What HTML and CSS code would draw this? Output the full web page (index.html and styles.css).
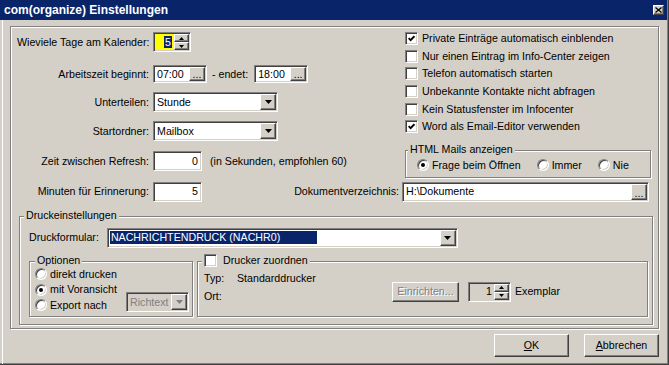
FILE: index.html
```html
<!DOCTYPE html>
<html lang="de">
<head>
    <meta charset="UTF-8">
    <title>com(organize) Einstellungen</title>
    <link rel="stylesheet" href="styles.css">
</head>
<body>
<div class="window">
    <div class="titlebar">
        <span class="title">com(organize) Einstellungen</span>
        <span class="close raised">
            <svg width="7" height="6" viewBox="0 0 7 6"><path d="M0.5 0.5 L6.5 5.5 M6.5 0.5 L0.5 5.5" stroke="#000" stroke-width="1.2"/></svg>
        </span>
    </div>

    <div class="client">
        <div class="panel">
            <div class="top">
                <div class="left-col">
                    <div class="row">
                        <span class="lbl">Wieviele Tage am Kalender:</span>
                        <div class="field spin days">
                            <span class="spin-val"><span class="sel">5</span></span>
                            <span class="spin-btns">
                                <span class="spin-btn raised"><svg width="5" height="3" viewBox="0 0 5 3"><polygon points="2.5,0 5,3 0,3" fill="#000"/></svg></span>
                                <span class="spin-btn raised"><svg width="5" height="3" viewBox="0 0 5 3"><polygon points="0,0 5,0 2.5,3" fill="#000"/></svg></span>
                            </span>
                        </div>
                    </div>
                    <div class="row">
                        <span class="lbl">Arbeitszeit beginnt:</span>
                        <div class="field time">
                            <span class="text">07:00</span>
                            <span class="dots raised">...</span>
                        </div>
                        <span class="between">- endet:</span>
                        <div class="field time">
                            <span class="text">18:00</span>
                            <span class="dots raised">...</span>
                        </div>
                    </div>
                    <div class="row">
                        <span class="lbl">Unterteilen:</span>
                        <div class="field combo">
                            <span class="text">Stunde</span>
                            <span class="drop raised"><svg width="7" height="4" viewBox="0 0 7 4"><polygon points="0,0 7,0 3.5,4" fill="#000"/></svg></span>
                        </div>
                    </div>
                    <div class="row">
                        <span class="lbl">Startordner:</span>
                        <div class="field combo">
                            <span class="text">Mailbox</span>
                            <span class="drop raised"><svg width="7" height="4" viewBox="0 0 7 4"><polygon points="0,0 7,0 3.5,4" fill="#000"/></svg></span>
                        </div>
                    </div>
                    <div class="row">
                        <span class="lbl">Zeit zwischen Refresh:</span>
                        <div class="field num"><span class="text">0</span></div>
                        <span class="note">(in Sekunden, empfohlen 60)</span>
                    </div>
                </div>

                <div class="right-col">
                    <div class="check"><span class="cb"><svg width="7" height="7" viewBox="0 0 7 7"><polyline points="0.6,3.2 2.6,5.2 6.4,1.2" fill="none" stroke="#000" stroke-width="1.8"/></svg></span>Private Einträge automatisch einblenden</div>
                    <div class="check"><span class="cb"></span>Nur einen Eintrag im Info-Center zeigen</div>
                    <div class="check"><span class="cb"></span>Telefon automatisch starten</div>
                    <div class="check"><span class="cb"></span>Unbekannte Kontakte nicht abfragen</div>
                    <div class="check"><span class="cb"></span>Kein Statusfenster im Infocenter</div>
                    <div class="check"><span class="cb"><svg width="7" height="7" viewBox="0 0 7 7"><polyline points="0.6,3.2 2.6,5.2 6.4,1.2" fill="none" stroke="#000" stroke-width="1.8"/></svg></span>Word als Email-Editor verwenden</div>

                    <fieldset class="group html-group">
                        <legend>HTML Mails anzeigen</legend>
                        <div class="radios-inline">
                            <span class="radio"><span class="rb on"></span>Frage beim Öffnen</span>
                            <span class="radio"><span class="rb"></span>Immer</span>
                            <span class="radio"><span class="rb"></span>Nie</span>
                        </div>
                    </fieldset>
                </div>
            </div>

            <div class="row doc-row">
                <span class="lbl">Minuten für Erinnerung:</span>
                <div class="field num"><span class="text">5</span></div>
                <span class="doc-lbl">Dokumentverzeichnis:</span>
                <div class="field path">
                    <span class="text">H:\Dokumente</span>
                    <span class="dots raised">...</span>
                </div>
            </div>

            <fieldset class="group print">
                <legend>Druckeinstellungen</legend>
                <div class="form-row">
                    <span>Druckformular:</span>
                    <div class="field combo form-combo">
                        <span class="text"><span class="sel-block">NACHRICHTENDRUCK (NACHR0)</span></span>
                        <span class="drop raised"><svg width="7" height="4" viewBox="0 0 7 4"><polygon points="0,0 7,0 3.5,4" fill="#000"/></svg></span>
                    </div>
                </div>

                <div class="subgroups">
                    <fieldset class="group options">
                        <legend>Optionen</legend>
                        <div class="options-body">
                            <div class="radio-list">
                                <span class="radio"><span class="rb"></span>direkt drucken</span>
                                <span class="radio"><span class="rb on"></span>mit Voransicht</span>
                                <span class="radio"><span class="rb"></span>Export nach</span>
                            </div>
                            <div class="field combo disabled export">
                                <span class="text">Richtext</span>
                                <span class="drop raised"><svg width="7" height="4" viewBox="0 0 7 4"><polygon points="0,0 7,0 3.5,4" fill="#808080"/></svg></span>
                            </div>
                        </div>
                    </fieldset>

                    <fieldset class="group printer">
                        <legend><span class="cb"></span>Drucker zuordnen</legend>
                        <div class="printer-body">
                            <div class="info">
                                <span>Typ:</span><span>Standarddrucker</span>
                                <span>Ort:</span><span></span>
                            </div>
                            <div class="actions">
                                <span class="btn raised disabled setup">Einrichten...</span>
                                <div class="field spin copies">
                                    <span class="spin-val">1</span>
                                    <span class="spin-btns">
                                        <span class="spin-btn raised"><svg width="5" height="3" viewBox="0 0 5 3"><polygon points="2.5,0 5,3 0,3" fill="#000"/></svg></span>
                                        <span class="spin-btn raised"><svg width="5" height="3" viewBox="0 0 5 3"><polygon points="0,0 5,0 2.5,3" fill="#000"/></svg></span>
                                    </span>
                                </div>
                                <span>Exemplar</span>
                            </div>
                        </div>
                    </fieldset>
                </div>
            </fieldset>
        </div>

        <div class="footer">
            <span class="btn raised"><u>O</u>K</span>
            <span class="btn raised"><u>A</u>bbrechen</span>
        </div>
    </div>
</div>
</body>
</html>
```

FILE: styles.css
```css
body {
    margin: 0;
    background: #d4d0c8;
    font: 8pt "Liberation Sans", Arial, sans-serif;
    line-height: 13px;
    color: #000;
}
.window {
    width: 669px;
    height: 365px;
    box-sizing: border-box;
    display: flex;
    flex-direction: column;
    background: #d4d0c8;
    border-right: 1px solid #404040;
    border-bottom: 1px solid #404040;
    box-shadow: inset -1px -1px 0 #808080;
}
.titlebar {
    height: 20px;
    flex: none;
    margin-right: 1px;
    padding: 0 3px 0 4px;
    display: flex;
    align-items: center;
    justify-content: space-between;
    background: #0a246a;
    color: #fff;
    font: bold 12px "Liberation Sans", Arial, sans-serif;
}
.raised {
    box-sizing: border-box;
    background: #d4d0c8;
    border: 1px solid;
    border-color: #fff #404040 #404040 #fff;
    box-shadow: inset -1px -1px 0 #808080;
}
.close {
    width: 11px;
    height: 10px;
    display: flex;
    align-items: center;
    justify-content: center;
}
.client {
    flex: 1;
    margin-left: 2px;
    padding-left: 7px;
    border-left: 1px solid #fff;
}
.panel {
    width: 649px;
    height: 303px;
    box-sizing: border-box;
    margin-top: 6px;
    padding: 5px 7px 0 6px;
    border: 1px solid #808080;
    box-shadow: inset 1px 1px 0 #fff, 1px 1px 0 #fff;
}

/* controls */
.field {
    box-sizing: border-box;
    height: 20px;
    padding: 1px;
    display: flex;
    align-items: center;
    background: #fff;
    border: 1px solid;
    border-color: #808080 #fff #fff #808080;
    box-shadow: inset 1px 1px 0 #404040, inset -1px -1px 0 #d4d0c8;
    white-space: nowrap;
}
.field .text {
    flex: 1;
    padding: 0 2px;
    overflow: hidden;
}
.field.disabled {
    background: #d4d0c8;
    color: #808080;
}
.drop {
    width: 16px;
    height: 16px;
    flex: none;
    display: flex;
    align-items: center;
    justify-content: center;
}
.dots {
    width: 16px;
    height: 100%;
    flex: none;
    display: flex;
    align-items: flex-end;
    justify-content: center;
    line-height: 10px;
    padding-bottom: 1px;
}
.spin-val {
    flex: 1;
    text-align: right;
    padding-right: 2px;
}
.spin-btns {
    width: 15px;
    height: 100%;
    flex: none;
    display: flex;
    flex-direction: column;
}
.spin-btn {
    flex: 1;
    display: flex;
    align-items: center;
    justify-content: center;
}
.sel {
    background: #0a246a;
    color: #fff;
    padding: 0 1px;
}
.cb {
    width: 13px;
    height: 13px;
    flex: none;
    box-sizing: border-box;
    display: inline-flex;
    align-items: center;
    justify-content: center;
    background: #fff;
    border: 1px solid;
    border-color: #808080 #fff #fff #808080;
    box-shadow: inset 1px 1px 0 #404040, inset -1px -1px 0 #d4d0c8;
}
.rb {
    width: 12px;
    height: 12px;
    flex: none;
    box-sizing: border-box;
    border-radius: 50%;
    display: flex;
    align-items: center;
    justify-content: center;
    background: #fff;
    border: 1px solid;
    border-color: #808080 #fff #fff #808080;
    box-shadow: inset 1px 1px 0 #404040, inset -1px -1px 0 #d4d0c8;
}
.rb.on::after {
    content: "";
    width: 4px;
    height: 4px;
    border-radius: 50%;
    background: #000;
}
.radio {
    display: flex;
    align-items: center;
    gap: 3px;
    height: 13px;
    white-space: nowrap;
}
.btn {
    height: 23px;
    width: 75px;
    display: flex;
    align-items: center;
    justify-content: center;
}
.btn.disabled {
    color: #808080;
    text-shadow: 1px 1px 0 #fff;
}

/* group boxes */
.group {
    margin: 0;
    padding: 0 0 0 4px;
    border: 1px solid #808080;
    box-shadow: inset 1px 1px 0 #fff, 1px 1px 0 #fff;
    min-inline-size: 0;
}
.group legend {
    padding: 0 2px 3px;
    line-height: 13px;
    background: #d4d0c8;
    white-space: nowrap;
}

/* upper part */
.top {
    display: flex;
    align-items: flex-start;
}
.left-col {
    width: 384px;
    flex: none;
    display: grid;
    grid-template-rows: 32px 28px 29px 30px 20px;
}
.row {
    display: flex;
    align-items: center;
    height: 20px;
    white-space: nowrap;
}
.lbl {
    width: 132px;
    flex: none;
    margin-right: 4px;
    text-align: right;
}
.days {
    width: 38px;
    background: #ff0;
}
.time {
    width: 54px;
    height: 18px;
}
.between {
    margin: 0 6px 0 5px;
}
.combo {
    width: 125px;
}
.num {
    width: 49px;
}
.num .text {
    text-align: right;
}
.note {
    margin-left: 8px;
}
.right-col {
    flex: 1;
    margin-top: -2px;
    padding-left: 4px;
}
.check {
    display: flex;
    align-items: center;
    gap: 4px;
    height: 17.6px;
    white-space: nowrap;
}
.html-group {
    margin-top: 7px;
    padding-bottom: 5px;
}
.html-group legend {
    margin-left: -2px;
}
.radios-inline {
    display: flex;
    gap: 16px;
    margin-left: 7px;
}
.doc-row {
    margin-top: 4px;
}
.doc-lbl {
    margin-left: auto;
    margin-right: 3px;
}
.path {
    width: 247px;
    margin-right: 2px;
}

/* print settings */
.print {
    margin: 7px -2px 0 2px;
    padding: 3px 4px 7px 9px;
}
.print > legend {
    margin-left: -5px;
}
.form-row {
    display: flex;
    align-items: center;
    gap: 8px;
    height: 20px;
}
.form-combo {
    width: 351px;
}
.sel-block {
    display: inline-block;
    width: 206px;
    margin-left: -1px;
    padding-left: 1px;
    background: #0a246a;
    color: #fff;
}
.subgroups {
    display: flex;
    gap: 4px;
    margin-top: 6px;
}
.options {
    width: 164px;
    box-sizing: border-box;
    padding: 0 3px 3px 5px;
}
.options-body {
    display: flex;
    align-items: flex-end;
}
.radio-list {
    display: flex;
    flex-direction: column;
    margin-top: -3px;
}
.radio-list .radio {
    height: 15.5px;
}
.export {
    width: 63px;
    margin-left: auto;
    margin-bottom: 1px;
}
.printer {
    flex: 1;
    padding: 0 4px 3px 4px;
}
.printer legend {
    display: flex;
    align-items: center;
    gap: 6px;
}
.printer-body {
    display: flex;
    align-items: flex-end;
    padding-left: 2px;
}
.info {
    width: 188px;
    display: grid;
    grid-template-columns: 33px auto;
    row-gap: 5px;
    align-self: flex-start;
    margin-top: 2px;
}
.actions {
    display: flex;
    align-items: center;
    gap: 4px;
    margin-bottom: 1px;
}
.setup {
    width: 67px;
    height: 20px;
    margin-right: 5px;
}
.copies {
    width: 43px;
    background: #d4d0c8;
}

.footer {
    width: 649px;
    margin-top: 5px;
    display: flex;
    justify-content: flex-end;
    gap: 15px;
}
```
